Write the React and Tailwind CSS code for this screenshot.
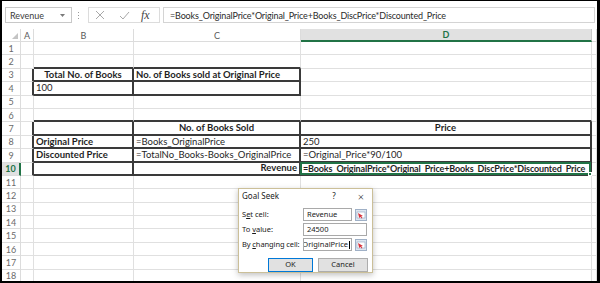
import React from "react";

const K = "k";

const rows = [
  { n: 1 },
  { n: 2, c: { B: { b: K }, C: { b: K } } },
  {
    n: 3,
    c: {
      A: { r: K },
      B: { r: K, b: K, t: "Total No. of Books", cls: "font-bold justify-center" },
      C: { r: K, b: K, t: "No. of Books sold at Original Price", cls: "font-bold" },
    },
  },
  {
    n: 4,
    c: {
      A: { r: K },
      B: { r: K, b: K, t: "100" },
      C: { r: K, b: K },
    },
  },
  { n: 5 },
  { n: 6, c: { B: { b: K }, C: { b: K }, D: { b: K } } },
  {
    n: 7,
    c: {
      A: { r: K },
      B: { r: K, b: K },
      C: { r: K, b: K, t: "No. of Books Sold", cls: "font-bold justify-center" },
      D: { r: K, b: K, t: "Price", cls: "font-bold justify-center" },
    },
  },
  {
    n: 8,
    c: {
      A: { r: K },
      B: { r: K, b: K, t: "Original Price", cls: "font-bold" },
      C: { r: K, b: K, t: "=Books_OriginalPrice" },
      D: { r: K, b: K, t: "250" },
    },
  },
  {
    n: 9,
    c: {
      A: { r: K },
      B: { r: K, b: K, t: "Discounted Price", cls: "font-bold" },
      C: { r: K, b: K, t: "=TotalNo_Books-Books_OriginalPrice" },
      D: { r: K, b: K, t: "=Original_Price*90/100" },
    },
  },
  {
    n: 10,
    sel: true,
    c: {
      A: { r: K },
      B: { r: K, b: K },
      C: { r: K, b: K, t: "Revenue", cls: "font-bold justify-end" },
      D: {
        r: K,
        b: K,
        t: "=Books_OriginalPrice*Original_Price+Books_DiscPrice*Discounted_Price",
        cls: "font-bold text-[9px] tracking-[-0.14px]",
        active: true,
      },
    },
  },
  { n: 11 },
  { n: 12 },
  { n: 13 },
  { n: 14 },
  { n: 15 },
  { n: 16 },
  { n: 17 },
  { n: 18 },
];

const Cell = ({ r, b, t, cls = "", active }) => {
  const rc = r === K ? "border-r-2 border-r-[#3a3a3a]" : "border-r border-r-[#e0e0e0]";
  const bc = b === K ? "border-b-2 border-b-[#3a3a3a]" : "border-b border-b-[#e0e0e0]";
  return (
    <div className={`relative flex items-center whitespace-nowrap px-[2px] text-[9.5px] text-[#1f1f1f] ${rc} ${bc} ${cls}`}>
      {t}
      {active && (
        <div className="absolute -left-[1px] -top-[1px] -right-[1px] -bottom-[1px] border-2 border-[#217346]">
          <div className="absolute -right-[3px] -bottom-[3px] h-[4px] w-[4px] border border-white bg-[#217346]" />
        </div>
      )}
    </div>
  );
};

const Picker = () => (
  <svg width="12" height="12" viewBox="0 0 12 12">
    <rect x="0.5" y="0.5" width="11" height="11" fill="#dfe6f0" stroke="#9fb0c6" />
    <rect x="2" y="3" width="8" height="6" fill="#ffffff" stroke="#8aa0bd" strokeWidth="0.6" />
    <path d="M3 4 L8 7 L6.2 7.3 L7.4 9 L6.6 9.5 L5.4 7.8 L4.2 9 Z" fill="#d9303a" />
  </svg>
);

export default function App() {
  const cols = ["A", "B", "C", "D", "E"];
  return (
    <div className="relative h-[283px] w-[600px] overflow-hidden border-t border-l-2 border-r-[3px] border-b-2 border-black bg-white font-['Lato',sans-serif] text-[9px] leading-none">
      {/* formula bar */}
      <div className="flex h-[28px] items-center pl-[3px] pr-[2px]">
        <div className="flex h-[16px] w-[67px] items-center border border-[#c8c8c8] pl-[4px] pr-[6px] text-[#3b3b3b]">
          <span>Revenue</span>
          <svg className="ml-auto" width="5" height="3" viewBox="0 0 5 3">
            <path d="M0 0 L5 0 L2.5 3 Z" fill="#7a7a7a" />
          </svg>
        </div>
        <div className="ml-[6px] flex flex-col gap-[2px]">
          <span className="h-[1px] w-[1px] bg-[#9a9a9a]" />
          <span className="h-[1px] w-[1px] bg-[#9a9a9a]" />
          <span className="h-[1px] w-[1px] bg-[#9a9a9a]" />
        </div>
        <div className="ml-[9px] flex h-[16px] w-[72px] items-center border border-[#dcdcdc] pl-[6px]">
          <svg width="10" height="10" viewBox="0 0 10 10">
            <path d="M1 1 L9 9 M9 1 L1 9" stroke="#a8a8a8" strokeWidth="1" fill="none" />
          </svg>
          <svg className="ml-[14px]" width="11" height="9" viewBox="0 0 11 9">
            <path d="M1 5 L4 8 L10 1" stroke="#a8a8a8" strokeWidth="1" fill="none" />
          </svg>
          <span className="ml-[11px] font-['Liberation_Serif',serif] text-[12px] italic text-[#444]">fx</span>
        </div>
        <div className="ml-[3px] flex h-[16px] flex-1 items-center border border-[#d4d4d4] pl-[6px] tracking-[-0.15px] text-[#2b2b2b]">
          =Books_OriginalPrice*Original_Price+Books_DiscPrice*Discounted_Price
        </div>
      </div>

      {/* column headers */}
      <div className="grid h-[13px] grid-cols-[19px_13px_100px_167px_291px_1fr] text-[#5a5a5a]">
        <div className="relative border-r border-b border-[#dcdcdc]">
          <svg className="absolute right-[2px] bottom-[2px]" width="6" height="6" viewBox="0 0 6 6">
            <path d="M6 0 L6 6 L0 6 Z" fill="#c4c4c4" />
          </svg>
        </div>
        {cols.map((c) =>
          c === "D" ? (
            <div key={c} className="flex items-center justify-center border-r border-r-[#c8c8c8] border-b-2 border-b-[#217346] bg-[#e1e1e1] font-bold text-[#217346]">
              {c}
            </div>
          ) : (
            <div key={c} className="flex items-center justify-center border-r border-b border-[#dcdcdc]">
              {c === "E" ? "" : c}
            </div>
          )
        )}
      </div>

      {/* sheet */}
      <div className="grid auto-rows-[13.4px] grid-cols-[19px_13px_100px_167px_291px_1fr]">
        {rows.map((row) => (
          <React.Fragment key={row.n}>
            {row.sel ? (
              <div className="flex items-center justify-center border-r-2 border-r-[#217346] border-b border-b-[#dcdcdc] bg-[#e1e1e1] font-bold text-[#217346]">
                {row.n}
              </div>
            ) : (
              <div className="flex items-center justify-center border-r border-b border-[#dcdcdc] text-[#6a6a6a]">
                {row.n}
              </div>
            )}
            {cols.map((c) => (
              <Cell key={c} {...((row.c && row.c[c]) || {})} />
            ))}
          </React.Fragment>
        ))}
      </div>

      {/* goal seek dialog */}
      <div className="absolute left-[236px] top-[187px] flex h-[85px] w-[135px] flex-col border border-[#cbbf98] bg-white font-['Noto_Sans',sans-serif] text-[7.5px] text-[#1a1a1a] shadow-[0_2px_6px_rgba(0,0,0,0.25)]">
        <div className="flex h-[14px] items-center pl-[3px] pr-[8px]">
          <span className="text-[8px]">Goal Seek</span>
          <span className="ml-auto text-[8px]">?</span>
          <span className="ml-[22px] text-[11px] font-light">×</span>
        </div>
        <div className="mt-[5px] flex flex-col gap-[2px] pl-[3px]">
          <div className="flex h-[13px] items-center">
            <span className="w-[61px]">
              S<span className="underline">e</span>t cell:
            </span>
            <div className="flex h-[13px] w-[49px] items-center border border-[#a9a9a9] pl-[3px]">Revenue</div>
            <div className="ml-[3px]">
              <Picker />
            </div>
          </div>
          <div className="flex h-[13px] items-center">
            <span className="w-[61px]">
              To <span className="underline">v</span>alue:
            </span>
            <div className="flex h-[13px] w-[64px] items-center border border-[#a9a9a9] pl-[3px]">24500</div>
          </div>
          <div className="flex h-[13px] items-center">
            <span className="w-[61px] tracking-[-0.1px]">
              By <span className="underline">c</span>hanging cell:
            </span>
            <div className="flex h-[13px] w-[49px] items-center justify-end overflow-hidden whitespace-nowrap border border-[#a9a9a9] pr-[1px]">
              <span className="shrink-0">=Books_OriginalPrice</span>
              <span className="ml-[1px] h-[8px] w-[1px] shrink-0 bg-black" />
            </div>
            <div className="ml-[3px]">
              <Picker />
            </div>
          </div>
        </div>
        <div className="mt-[7px] flex gap-[5px] pl-[29px]">
          <div className="flex h-[14px] w-[45px] items-center justify-center border border-[#0078d7] bg-[#e1e1e1]">OK</div>
          <div className="flex h-[14px] w-[50px] items-center justify-center border border-[#adadad] bg-[#e1e1e1]">Cancel</div>
        </div>
      </div>
    </div>
  );
}
